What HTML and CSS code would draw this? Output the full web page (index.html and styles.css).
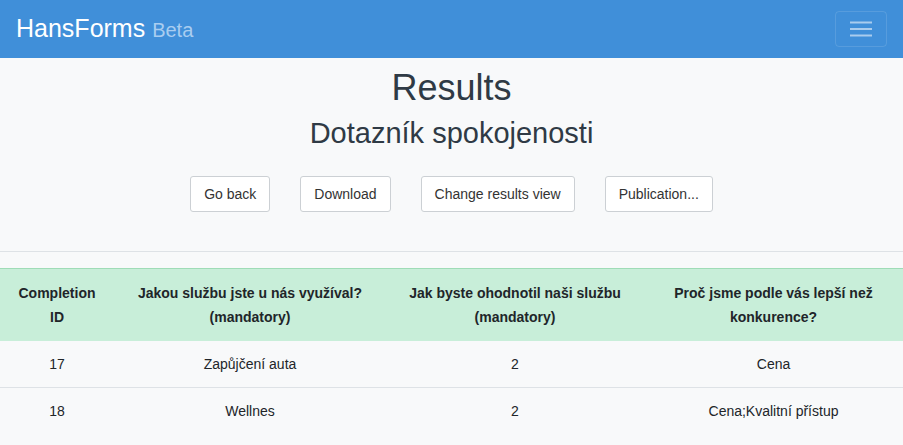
FILE: index.html
```html
<!DOCTYPE html>
<html lang="cs">
<head>
<meta charset="utf-8">
<title>HansForms - Results</title>
<link rel="stylesheet" href="styles.css">
</head>
<body>
<nav class="navbar">
  <a class="brand" href="#">HansForms <span class="beta">Beta</span></a>
  <button class="toggler" type="button" aria-label="Menu">
    <svg width="22" height="16" viewBox="0 0 22 16"><path d="M0 1.5h22M0 8h22M0 14.5h22" stroke="rgba(255,255,255,0.55)" stroke-width="2"/></svg>
  </button>
</nav>
<main class="content">
  <h1 class="title">Results</h1>
  <h3 class="subtitle">Dotazník spokojenosti</h3>
  <div class="actions">
    <button class="btn">Go back</button>
    <button class="btn">Download</button>
    <button class="btn">Change results view</button>
    <button class="btn">Publication...</button>
  </div>
  <hr class="divider">
  <table class="results">
    <colgroup>
      <col class="c1"><col class="c2"><col class="c3"><col class="c4">
    </colgroup>
    <thead>
      <tr>
        <th>Completion ID</th>
        <th>Jakou službu jste u nás využíval? (mandatory)</th>
        <th>Jak byste ohodnotil naši službu (mandatory)</th>
        <th>Proč jsme podle vás lepší než konkurence?</th>
      </tr>
    </thead>
    <tbody>
      <tr><td>17</td><td>Zapůjčení auta</td><td>2</td><td>Cena</td></tr>
      <tr><td>18</td><td>Wellnes</td><td>2</td><td>Cena;Kvalitní přístup</td></tr>
    </tbody>
  </table>
</main>
</body>
</html>
```
FILE: styles.css
```css
* { box-sizing: border-box; }
html, body { margin: 0; padding: 0; }
body {
  background: #f8f9fa;
  color: #212529;
  font-family: "Liberation Sans", Arial, sans-serif;
  font-size: 14px;
}
.navbar {
  height: 58px;
  background: #408fd9;
  display: flex;
  align-items: center;
  justify-content: space-between;
  padding: 0 16px;
}
.brand {
  color: #fff;
  text-decoration: none;
  font-size: 25px;
  line-height: 30px;
}
.beta {
  color: #a9cdf0;
  font-size: 20px;
}
.toggler {
  width: 52px;
  height: 36px;
  background: transparent;
  border: 1px solid rgba(255,255,255,0.12);
  border-radius: 4px;
  display: flex;
  align-items: center;
  justify-content: center;
  padding: 0;
}
.toggler svg { display: block; }
.content { text-align: center; }
.title {
  margin: 8px 0 0;
  font-size: 36px;
  font-weight: 400;
  line-height: 44px;
  color: #2f3a45;
}
.subtitle {
  margin: 6px 0 0;
  font-size: 29px;
  font-weight: 400;
  line-height: 34px;
  color: #2f3a45;
}
.actions {
  display: flex;
  justify-content: center;
  gap: 30px;
  margin-top: 26px;
}
.btn {
  font-family: inherit;
  font-size: 14px;
  line-height: 20px;
  color: #333;
  background: #fff;
  border: 1px solid #ccd0d4;
  border-radius: 3px;
  padding: 7px 13px;
  height: 36px;
}
.divider {
  margin: 39px 0 0;
  border: 0;
  border-top: 1px solid #dee2e6;
}
.results {
  margin-top: 16px;
  width: 100%;
  border-collapse: collapse;
  table-layout: fixed;
}
.c1 { width: 114px; }
.c2 { width: 272px; }
.c3 { width: 258px; }
.c4 { width: 259px; }
.results thead tr {
  background: #c8eed9;
  border-top: 1px solid #9fdcb7;
}
.results th {
  font-weight: 700;
  line-height: 24px;
  padding: 12px 12px;
  color: #212529;
}
.results td {
  line-height: 22px;
  padding: 12px 12px;
  border-top: 1px solid #dee2e6;
}
.results tbody tr:first-child td { border-top: 0; }
```
